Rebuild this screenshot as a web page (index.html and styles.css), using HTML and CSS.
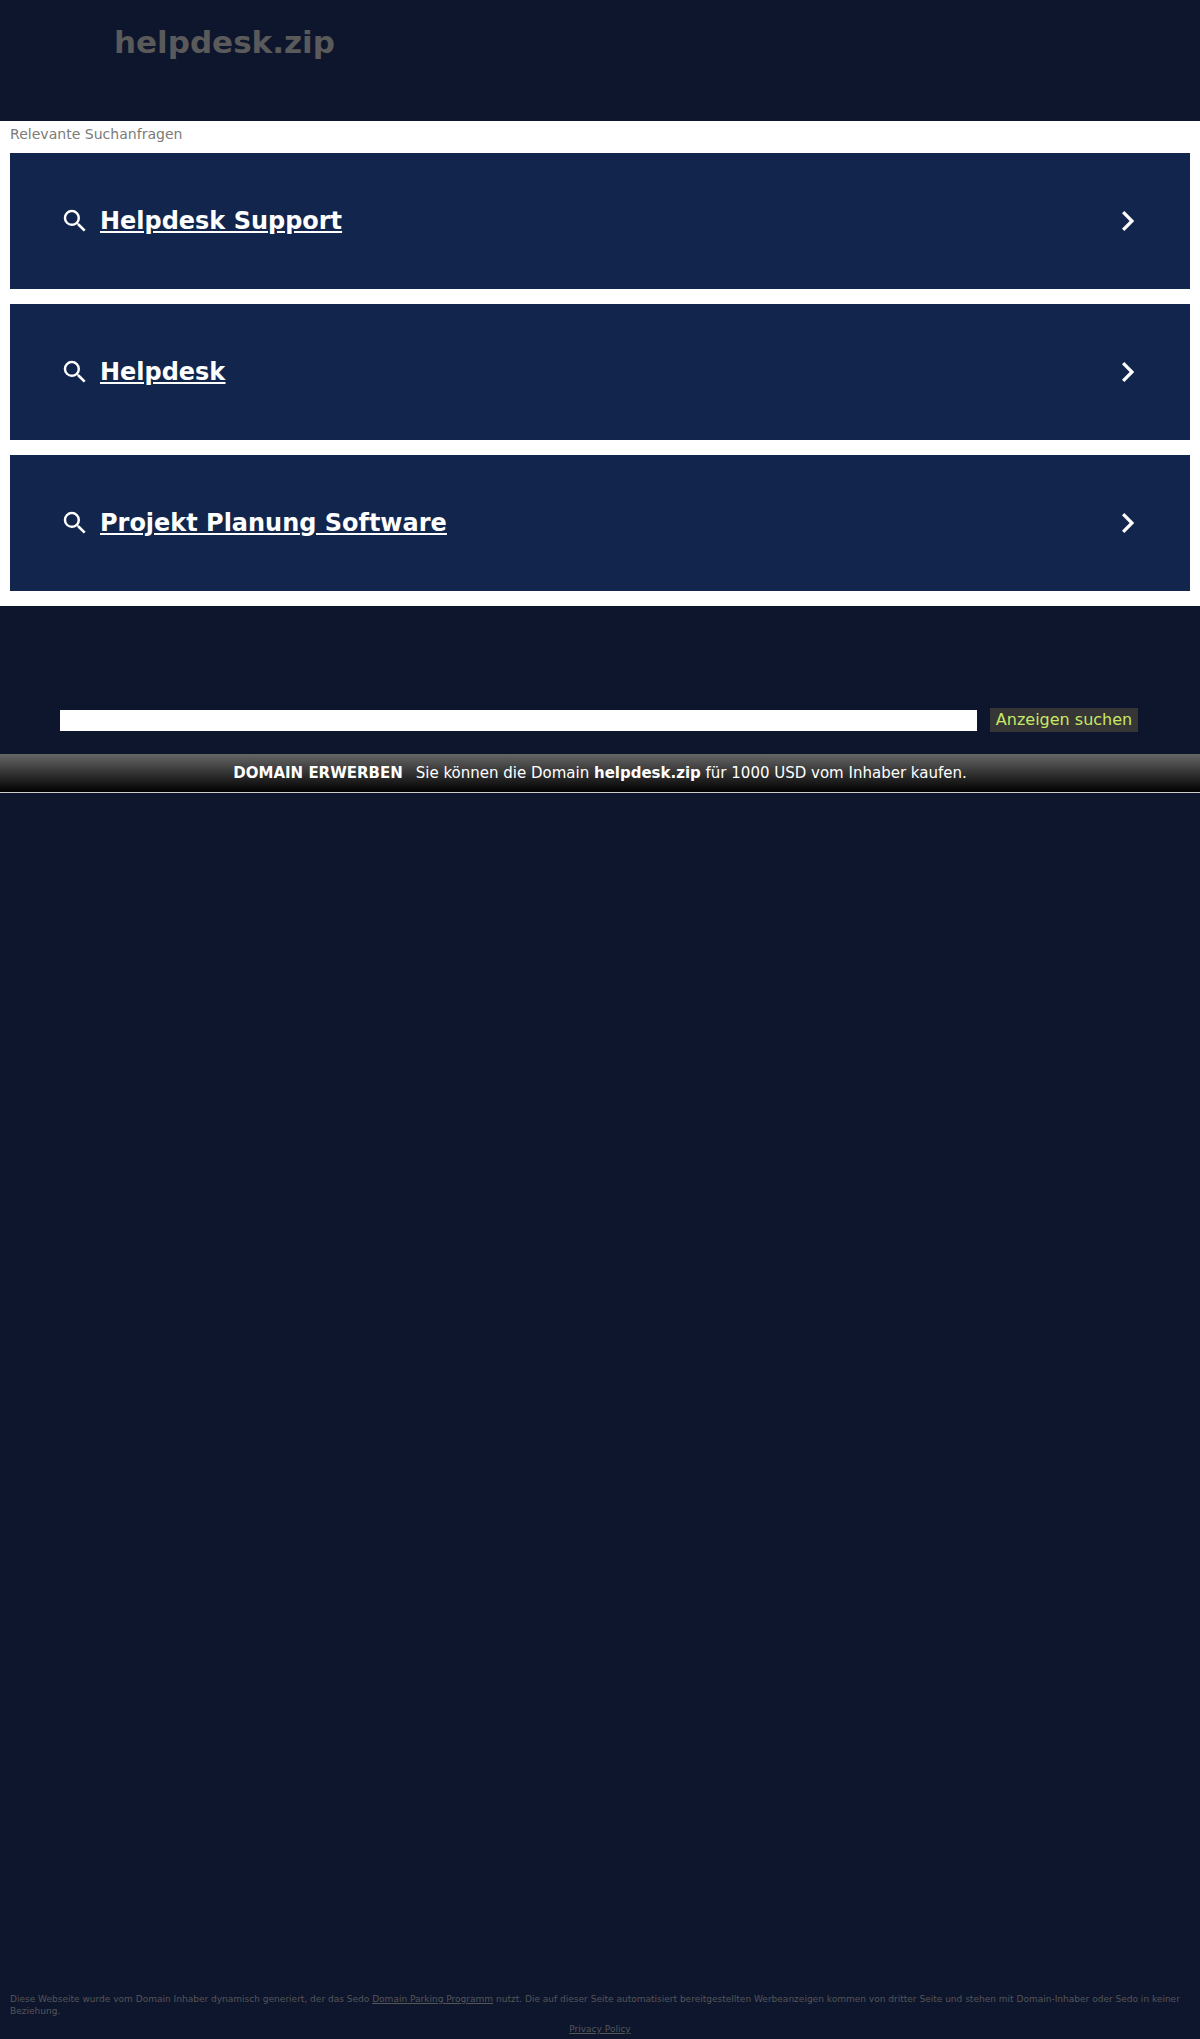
FILE: index.html
```html
<!DOCTYPE html>
<html lang="de">
<head>
<meta charset="utf-8">
<title>helpdesk.zip</title>
<link rel="stylesheet" href="styles.css">
</head>
<body>
<header class="header"><h1 class="domain">helpdesk.zip</h1></header>
<main class="results">
  <p class="results-label">Relevante Suchanfragen</p>
  <div class="cards">
    <a class="card" href="#">
      <svg class="icon-search" viewBox="0 0 24 24"><path d="M15.5 14h-.79l-.28-.27A6.471 6.471 0 0 0 16 9.5 6.5 6.5 0 1 0 9.5 16c1.61 0 3.09-.59 4.23-1.57l.27.28v.79l5 4.99L20.49 19l-4.99-5zm-6 0C7.01 14 5 11.99 5 9.5S7.01 5 9.5 5 14 7.01 14 9.5 11.99 14 9.5 14z"/></svg>
      <span class="card-title">Helpdesk Support</span>
      <svg class="icon-chevron" viewBox="8.59 6 7.41 12"><path d="M10 6L8.59 7.41 13.17 12l-4.58 4.59L10 18l6-6z"/></svg>
    </a>
    <a class="card" href="#">
      <svg class="icon-search" viewBox="0 0 24 24"><path d="M15.5 14h-.79l-.28-.27A6.471 6.471 0 0 0 16 9.5 6.5 6.5 0 1 0 9.5 16c1.61 0 3.09-.59 4.23-1.57l.27.28v.79l5 4.99L20.49 19l-4.99-5zm-6 0C7.01 14 5 11.99 5 9.5S7.01 5 9.5 5 14 7.01 14 9.5 11.99 14 9.5 14z"/></svg>
      <span class="card-title">Helpdesk</span>
      <svg class="icon-chevron" viewBox="8.59 6 7.41 12"><path d="M10 6L8.59 7.41 13.17 12l-4.58 4.59L10 18l6-6z"/></svg>
    </a>
    <a class="card" href="#">
      <svg class="icon-search" viewBox="0 0 24 24"><path d="M15.5 14h-.79l-.28-.27A6.471 6.471 0 0 0 16 9.5 6.5 6.5 0 1 0 9.5 16c1.61 0 3.09-.59 4.23-1.57l.27.28v.79l5 4.99L20.49 19l-4.99-5zm-6 0C7.01 14 5 11.99 5 9.5S7.01 5 9.5 5 14 7.01 14 9.5 11.99 14 9.5 14z"/></svg>
      <span class="card-title">Projekt Planung Software</span>
      <svg class="icon-chevron" viewBox="8.59 6 7.41 12"><path d="M10 6L8.59 7.41 13.17 12l-4.58 4.59L10 18l6-6z"/></svg>
    </a>
  </div>
</main>
<form class="search">
  <input class="search-input" type="text" aria-label="Suche">
  <button class="search-button" type="button">Anzeigen suchen</button>
</form>
<div class="buy-bar"><b class="buy-title">DOMAIN ERWERBEN</b><span>Sie können die Domain <b>helpdesk.zip</b> für 1000 USD vom Inhaber kaufen.</span></div>
<footer class="footer">
  <p class="disclaimer">Diese Webseite wurde vom Domain Inhaber dynamisch generiert, der das Sedo <a href="#">Domain Parking Programm</a> nutzt. Die auf dieser Seite automatisiert bereitgestellten Werbeanzeigen kommen von dritter Seite und stehen mit Domain-Inhaber oder Sedo in keiner Beziehung.</p>
  <p class="privacy"><a href="#">Privacy Policy</a></p>
</footer>
</body>
</html>
```

FILE: styles.css
```css
* { box-sizing: border-box; }
body {
  margin: 0;
  min-height: 2039px;
  display: flex;
  flex-direction: column;
  background: #0e162e;
  font-family: "DejaVu Sans", sans-serif;
}
p, h1 { margin: 0; }
.header { height: 121px; padding: 24px 114px 0; }
.domain { font-size: 31px; line-height: 37px; color: #5a5a5a; }
.results { height: 485px; padding: 0 10px; background: #fff; }
.results-label { height: 32px; font-size: 14.05px; line-height: 26px; color: #7b7b7b; }
.cards { display: flex; flex-direction: column; gap: 15px; }
.card {
  display: flex;
  align-items: center;
  height: 136px;
  padding: 0 56px 0 50px;
  background: #12264d;
  color: #fff;
}
.icon-search { width: 30px; height: 30px; fill: #fff; }
.card-title { flex: 1; margin-left: 10px; font-size: 23.97px; font-weight: bold; text-decoration: underline; }
.icon-chevron { width: 12.35px; height: 20px; fill: #fff; }
.search {
  display: flex;
  align-items: center;
  gap: 13px;
  height: 148px;
  padding: 80px 62px 0 60px;
}
.search-input { flex: 1; height: 21px; border: 0; padding: 0; background: #fff; }
.search-button {
  width: 148px;
  height: 24px;
  padding: 0;
  border: 0;
  background: #363636;
  color: #c8e866;
  font: 16px/24px "DejaVu Sans", sans-serif;
}
.buy-bar {
  display: flex;
  justify-content: center;
  gap: 13px;
  height: 39px;
  border-bottom: 1px solid #ccc;
  background: linear-gradient(#666, #000);
  color: #fff;
  font-size: 15px;
  line-height: 38px;
}
.footer { margin-top: auto; padding: 0 10px 4px; font-size: 9.02px; line-height: 12px; color: #555; }
.footer a { color: inherit; }
.privacy { margin-top: 6px; text-align: center; }
```
